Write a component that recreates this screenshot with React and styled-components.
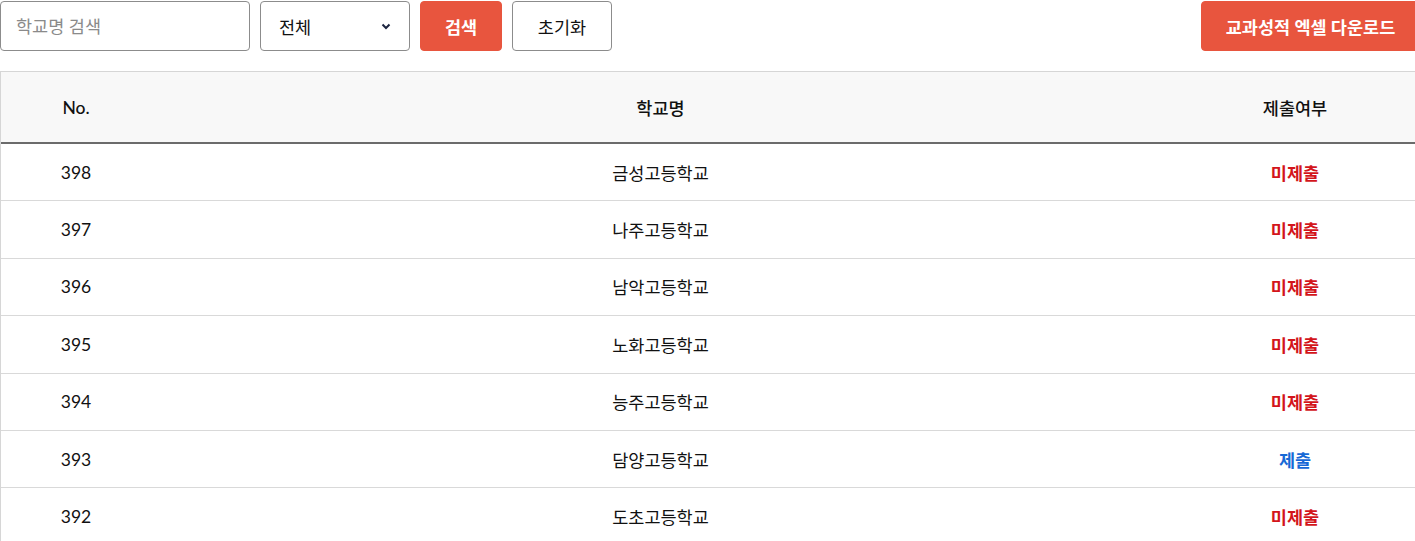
import React from 'react';
import styled, { createGlobalStyle } from 'styled-components';

const GlobalStyle = createGlobalStyle`
    body {
        margin: 0;
        font-family: Lato, "Noto Sans CJK KR", sans-serif;
        color: #111;
        background: #fff;
    }
    * { box-sizing: border-box; }
`

const Page = styled.div`
    width: 1420px;
    padding-top: 1px;
`

const Toolbar = styled.div`
    display: flex;
    align-items: center;
    gap: 10px;
    height: 50px;
    margin-bottom: 20px;
`

const SearchInput = styled.input`
    width: 250px;
    height: 50px;
    border: 1px solid #8c8c8c;
    border-radius: 4px;
    padding: 0 15px;
    font-family: Lato, "Noto Sans CJK KR", sans-serif;
    font-size: 17.5px;
    color: #111;
    outline: none;
    &::placeholder { color: #8a8a8a; }
`

const SelectBox = styled.div`
    width: 150px;
    height: 50px;
    border: 1px solid #8c8c8c;
    border-radius: 4px;
    padding: 0 17px 0 18px;
    display: flex;
    align-items: center;
    justify-content: space-between;
    font-size: 17.5px;
    color: #111;
`

const Button = styled.button`
    height: 50px;
    width: ${p => p.$width}px;
    border-radius: 4px;
    font-family: Lato, "Noto Sans CJK KR", sans-serif;
    font-size: 17.5px;
    font-weight: ${p => p.$primary ? 700 : 400};
    color: ${p => p.$primary ? '#fff' : '#111'};
    background: ${p => p.$primary ? '#e8553e' : '#fff'};
    border: 1px solid ${p => p.$primary ? '#e8553e' : '#8c8c8c'};
    cursor: pointer;
`

const Spacer = styled.div`
    flex: 1;
`

const Table = styled.div`
    border-top: 1px solid #d6d6d6;
    border-left: 1px solid #d6d6d6;
`

const Row = styled.div`
    display: grid;
    grid-template-columns: 150px 1fr 250px;
    align-items: center;
    height: ${p => p.$head ? 72 : 57.4}px;
    background: ${p => p.$head ? '#f8f8f8' : '#fff'};
    border-bottom: ${p => p.$head ? '2px solid #6b6b6b' : '1px solid #d9d9d9'};
    font-size: 17.5px;
    font-weight: ${p => p.$head ? 500 : 400};
`

const Cell = styled.div`
    text-align: center;
`

const Status = styled.span`
    font-weight: 700;
    color: ${p => p.$done ? '#1769d6' : '#d3151b'};
`

const rows = [
    [398, '금성고등학교', false],
    [397, '나주고등학교', false],
    [396, '남악고등학교', false],
    [395, '노화고등학교', false],
    [394, '능주고등학교', false],
    [393, '담양고등학교', true],
    [392, '도초고등학교', false],
];

const App = () => {
    return (
        <Page>
            <GlobalStyle />
            <Toolbar>
                <SearchInput placeholder='학교명 검색' />
                <SelectBox>
                    <span>전체</span>
                    <svg width='12' height='12' viewBox='0 0 12 12'>
                        <path d='M2.5 4.5 L6 8 L9.5 4.5' fill='none' stroke='#1c2540' strokeWidth='2' />
                    </svg>
                </SelectBox>
                <Button $primary $width={82}>검색</Button>
                <Button $width={100}>초기화</Button>
                <Spacer />
                <Button $primary $width={219}>교과성적 엑셀 다운로드</Button>
            </Toolbar>
            <Table>
                <Row $head>
                    <Cell>No.</Cell>
                    <Cell>학교명</Cell>
                    <Cell>제출여부</Cell>
                </Row>
                {rows.map(([no, name, done]) => (
                    <Row key={no}>
                        <Cell>{no}</Cell>
                        <Cell>{name}</Cell>
                        <Cell><Status $done={done}>{done ? '제출' : '미제출'}</Status></Cell>
                    </Row>
                ))}
            </Table>
        </Page>
    )
}

export default App;
